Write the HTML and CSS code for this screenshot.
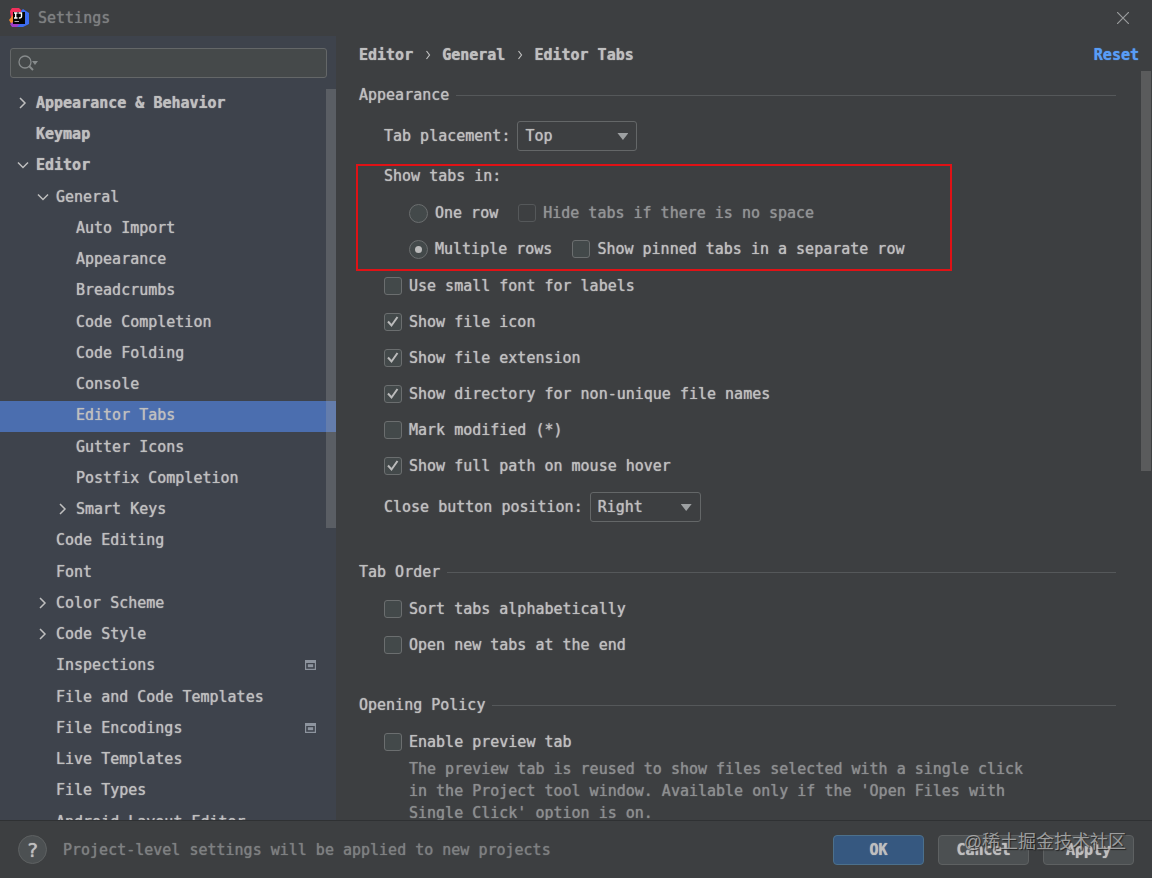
FILE: index.html
```html
<!DOCTYPE html>
<html lang="en">
<head>
<meta charset="utf-8">
<title>Settings</title>
<link rel="stylesheet" href="styles.css">
</head>
<body>
<svg class="defs" aria-hidden="true">
  <symbol id="right" viewBox="0 0 16 16"><path d="M5 3l5 5-5 5" fill="none" stroke="currentColor" stroke-width="1.5"/></symbol>
  <symbol id="down" viewBox="0 0 16 16"><path d="M3 5.500l5 5 5-5" fill="none" stroke="currentColor" stroke-width="1.5"/></symbol>
  <symbol id="project" viewBox="0 0 11 10"><path fill="currentColor" fill-rule="evenodd" d="M0 0h11v10H0zM1.200 3h8.600v5.800H1.200z"/><path fill="currentColor" d="M2.800 4.200h5.400v3H2.800z"/></symbol>
  <symbol id="crumb" viewBox="0 0 6 10"><path d="M1.500 1l3 4-3 4" fill="none" stroke="currentColor" stroke-width="1.200"/></symbol>
</svg>
<div class="window">
  <header class="titlebar">
    <svg class="logo" viewBox="0 0 20 20" aria-hidden="true">
      <path d="M1 3L3 0h7l3 3v12L3 18z" fill="#f0305c"/>
      <path d="M0 12l4-5 3 9-4 1z" fill="#f58a2c"/>
      <path d="M1 16l6-4 6 7H3z" fill="#a03cc8"/>
      <path d="M12 3l2-2 6 4v11l-6 3H8l4-4z" fill="#3d6df2"/>
      <path d="M4 4h12v12H4z" fill="#050505"/>
      <path d="M5 5h3.500M6.700 5v5M5 10h3.500M9.500 5h3v3.500c0 1.200-.8 1.600-2.700 1.400" fill="none" stroke="#fff" stroke-width="1.400"/>
      <path d="M5.500 13.500h4.500" stroke="#aaa" stroke-width="1"/>
    </svg>
    <h1 class="title">Settings</h1>
    <button class="close" aria-label="Close"><svg viewBox="0 0 12 12"><path d="M0 0l12 12M12 0L0 12" stroke="currentColor" stroke-width="1.200"/></svg></button>
  </header>

  <div class="body">
    <aside class="sidebar">
      <div class="search">
        <svg class="search-icon" viewBox="0 0 22 18" aria-hidden="true"><circle cx="7" cy="8" r="6" fill="none" stroke="currentColor" stroke-width="1.300"/><path d="M11 12l4 4" stroke="currentColor" stroke-width="2"/><path d="M14 7h6l-3 4z" fill="currentColor"/></svg>
        <input class="search-input" type="text" aria-label="Search settings">
      </div>
      <nav class="tree-area" aria-label="Settings categories">
        <ul class="tree">
          <li class="row strong"><svg class="arrow"><use href="#right"/></svg><a href="#a">Appearance &amp; Behavior</a></li>
          <li class="row strong"><span class="arrow"></span><a href="#a">Keymap</a></li>
          <li class="row strong"><svg class="arrow"><use href="#down"/></svg><a href="#a">Editor</a></li>
          <li class="row level1"><svg class="arrow"><use href="#down"/></svg><a href="#a">General</a></li>
          <li class="row level2"><span class="arrow"></span><a href="#a">Auto Import</a></li>
          <li class="row level2"><span class="arrow"></span><a href="#a">Appearance</a></li>
          <li class="row level2"><span class="arrow"></span><a href="#a">Breadcrumbs</a></li>
          <li class="row level2"><span class="arrow"></span><a href="#a">Code Completion</a></li>
          <li class="row level2"><span class="arrow"></span><a href="#a">Code Folding</a></li>
          <li class="row level2"><span class="arrow"></span><a href="#a">Console</a></li>
          <li class="row level2 selected"><span class="arrow"></span><a href="#a" aria-current="page">Editor Tabs</a></li>
          <li class="row level2"><span class="arrow"></span><a href="#a">Gutter Icons</a></li>
          <li class="row level2"><span class="arrow"></span><a href="#a">Postfix Completion</a></li>
          <li class="row level2"><svg class="arrow"><use href="#right"/></svg><a href="#a">Smart Keys</a></li>
          <li class="row level1"><span class="arrow"></span><a href="#a">Code Editing</a></li>
          <li class="row level1"><span class="arrow"></span><a href="#a">Font</a></li>
          <li class="row level1"><svg class="arrow"><use href="#right"/></svg><a href="#a">Color Scheme</a></li>
          <li class="row level1"><svg class="arrow"><use href="#right"/></svg><a href="#a">Code Style</a></li>
          <li class="row level1"><span class="arrow"></span><a href="#a">Inspections</a><svg class="badge"><use href="#project"/></svg></li>
          <li class="row level1"><span class="arrow"></span><a href="#a">File and Code Templates</a></li>
          <li class="row level1"><span class="arrow"></span><a href="#a">File Encodings</a><svg class="badge"><use href="#project"/></svg></li>
          <li class="row level1"><span class="arrow"></span><a href="#a">Live Templates</a></li>
          <li class="row level1"><span class="arrow"></span><a href="#a">File Types</a></li>
          <li class="row level1"><span class="arrow"></span><a href="#a">Android Layout Editor</a></li>
        </ul>
        <div class="thumb thumb-tree"></div>
      </nav>
    </aside>

    <main class="main">
      <div class="topline">
        <nav class="crumbs" aria-label="Breadcrumb">
          <span>Editor</span><svg class="crumb"><use href="#crumb"/></svg><span>General</span><svg class="crumb"><use href="#crumb"/></svg><span>Editor Tabs</span>
        </nav>
        <a class="reset" href="#reset">Reset</a>
      </div>
      <div class="scroll">
        <section class="section">
          <h2 class="heading roomy">Appearance</h2>
          <div class="content">
            <div class="field">
              <label for="placement">Tab placement:</label>
              <span class="select wide"><select id="placement"><option>Top</option><option>Bottom</option></select></span>
            </div>
            <div class="tabs-in" role="radiogroup" aria-labelledby="tabs-in">
              <div class="group-label" id="tabs-in">Show tabs in:</div>
              <div class="options">
                <label class="option"><input type="radio" name="rows">One row</label>
                <label class="option disabled"><input type="checkbox" disabled>Hide tabs if there is no space</label>
              </div>
              <div class="options">
                <label class="option"><input type="radio" name="rows" checked>Multiple rows</label>
                <label class="option"><input type="checkbox">Show pinned tabs in a separate row</label>
              </div>
              <div class="highlight"></div>
            </div>
            <label class="option"><input type="checkbox">Use small font for labels</label>
            <label class="option"><input type="checkbox" checked>Show file icon</label>
            <label class="option"><input type="checkbox" checked>Show file extension</label>
            <label class="option"><input type="checkbox" checked>Show directory for non-unique file names</label>
            <label class="option"><input type="checkbox">Mark modified (*)</label>
            <label class="option"><input type="checkbox" checked>Show full path on mouse hover</label>
            <div class="field last">
              <label for="closepos">Close button position:</label>
              <span class="select"><select id="closepos"><option>Right</option><option>Left</option></select></span>
            </div>
          </div>
        </section>
        <section class="section">
          <h2 class="heading">Tab Order</h2>
          <div class="content">
            <label class="option"><input type="checkbox">Sort tabs alphabetically</label>
            <label class="option"><input type="checkbox">Open new tabs at the end</label>
          </div>
        </section>
        <section class="section">
          <h2 class="heading">Opening Policy</h2>
          <div class="content">
            <label class="option"><input type="checkbox" aria-describedby="preview-note">Enable preview tab</label>
            <p class="note" id="preview-note">The preview tab is reused to show files selected with a single click in the Project tool window. Available only if the 'Open Files with Single Click' option is on.</p>
          </div>
        </section>
      </div>
      <div class="thumb thumb-main"></div>
    </main>
  </div>

  <footer class="footer">
    <button class="help" aria-label="Help">?</button>
    <p class="status">Project-level settings will be applied to new projects</p>
    <button class="button primary">OK</button>
    <button class="button">Cancel</button>
    <button class="button">Apply</button>
    <span class="watermark">@稀土掘金技术社区</span>
  </footer>
</div>
</body>
</html>
```
FILE: styles.css
```css
* { box-sizing: border-box; }

body {
  margin: 0;
  background: #3d3f41;
  color: #bfbfbf;
  font: 15px/20px "DejaVu Sans Mono", "Liberation Mono", monospace;
  text-shadow: 0 0 1px currentColor;
}

button, input, select { font: inherit; color: inherit; text-shadow: inherit; }
a { color: inherit; text-decoration: none; }
h1, h2, p, ul { margin: 0; padding: 0; font: inherit; list-style: none; }
svg { flex: none; }
.defs { display: none; }

.window { display: flex; flex-direction: column; height: 100vh; overflow: hidden; }

.titlebar { display: flex; align-items: center; flex: none; height: 36px; padding: 0 23px 0 9px; }
.logo { width: 20px; height: 20px; }
.title { flex: 1; margin-left: 9px; color: #7e8081; }
.close { display: flex; padding: 0; border: 0; background: none; color: #9a9c9d; }
.close svg { width: 12px; height: 12px; }

.body { display: flex; flex: 1; min-height: 0; }

.sidebar { display: flex; flex-direction: column; flex: none; width: 336px; padding-top: 12px; background: #3e434c; }
.search {
  display: flex; align-items: center; flex: none; gap: 4px; height: 30px;
  margin: 0 9px 11px 10px; padding: 0 7px;
  border: 1px solid #646768; border-radius: 3px; background: #45494a; color: #878b8c;
}
.search-icon { width: 22px; height: 18px; }
.search-input { flex: 1; min-width: 0; padding: 0; border: 0; outline: 0; background: none; }

.tree-area { position: relative; flex: 1; min-height: 0; overflow: hidden; }
.row { display: flex; align-items: center; height: 31px; padding: 0 20px 3px 15px; }
/* every fourth row takes the spare pixel of the row pitch */
.row:nth-child(4n+3) { height: 32px; padding-bottom: 4px; }
.row.selected { height: 31px; margin-bottom: 1px; padding-bottom: 3px; background: #4b6eaf; }
.level1 { padding-left: 35px; }
.level2 { padding-left: 55px; }
.strong, .crumbs, .reset { font-weight: bold; }
.arrow { flex: none; width: 16px; height: 16px; margin-right: 5px; }
.badge { width: 11px; height: 10px; margin-left: auto; color: #8d949e; }

.thumb { position: absolute; right: 0; width: 10px; background: rgba(166, 166, 166, 0.28); }
.thumb-tree { top: 0; height: 60%; }
.thumb-main { top: 35px; right: 1px; height: 51%; }

.main { position: relative; display: flex; flex-direction: column; flex: 1; min-width: 0; }
.topline { display: flex; align-items: center; justify-content: space-between; flex: none; height: 38px; padding: 0 13px 0 23px; }
.crumbs { display: flex; align-items: center; }
.crumb { width: 6px; height: 10px; margin: 0 11px 0 12px; }
.reset { color: #589df6; }

.scroll { flex: 1; min-height: 0; padding: 11px 36px 0 23px; overflow: hidden; }
.section { margin-bottom: 32px; }
.heading { display: flex; align-items: center; gap: 7px; margin-bottom: 9px; }
.heading.roomy { margin-bottom: 16px; }
.heading::after { content: ""; flex: 1; height: 1px; background: #55585a; }
.content { padding-left: 25px; }
.field { display: flex; align-items: center; gap: 7px; height: 30px; }
.field.last { margin: 8px 0 40px; }

.select { position: relative; display: flex; width: 111px; height: 30px; }
.select.wide { width: 120px; }
.select select { appearance: none; width: 100%; padding: 0 7px; border: 1px solid #646768; border-radius: 3px; background: #3d3f41; }
.select::after { content: ""; position: absolute; top: 12px; right: 9px; width: 11px; height: 7px; background: #9da0a2; clip-path: polygon(0 0, 100% 0, 50% 100%); pointer-events: none; }

.tabs-in { position: relative; margin: 15px 0 1px; }
.group-label { margin-bottom: 9px; }
.options { display: flex; gap: 20px; padding-left: 25px; }
.highlight { position: absolute; top: -2px; bottom: -4px; left: -28px; width: 596px; border: 2px solid #e01216; pointer-events: none; }

.option { display: flex; align-items: center; gap: 7px; height: 36px; }
.option.disabled { color: #919394; }
.option input { position: relative; appearance: none; flex: none; width: 18px; height: 18px; margin: 0; border: 1px solid #6b6e6f; border-radius: 3px; background: #43494a; }
.option input[type="radio"] { width: 19px; height: 19px; border-radius: 50%; }
.option input:disabled { border-color: #55585a; background: none; }
.option input[type="radio"]:checked::after { content: ""; position: absolute; inset: 5px; border-radius: 50%; background: #bbbbbb; }
.option input[type="checkbox"]:checked {
  background-image: url("data:image/svg+xml,%3Csvg xmlns='http://www.w3.org/2000/svg' viewBox='0 0 16 16'%3E%3Cpath d='M3 7.500l3.500 4L12.500 3' fill='none' stroke='%23bbbbbb' stroke-width='2'/%3E%3C/svg%3E");
}

.note { max-width: 655px; margin-top: -2px; padding-left: 25px; color: #8c8e8f; line-height: 22px; }

.footer { position: relative; display: flex; align-items: center; flex: none; gap: 14px; height: 58px; padding: 0 18px; border-top: 1px solid #2f3133; }
.help { width: 29px; height: 29px; padding: 0; border: 1px solid #5e6162; border-radius: 50%; background: #4c5052; font-size: 20px; }
.status { flex: 1; margin-left: 2px; color: #7e8081; }
.button { width: 91px; height: 30px; padding: 0; border: 1px solid #5e6162; border-radius: 4px; background: #4c5052; font-weight: bold; }
.button.primary { border-color: #4c708c; background: #365880; }
.watermark { position: absolute; top: 9px; right: 26px; color: rgba(190, 190, 190, 0.75); font: 18px/24px "Liberation Sans", "Noto Sans CJK SC", sans-serif; text-shadow: 1px 1px 1px #222; pointer-events: none; }
```
